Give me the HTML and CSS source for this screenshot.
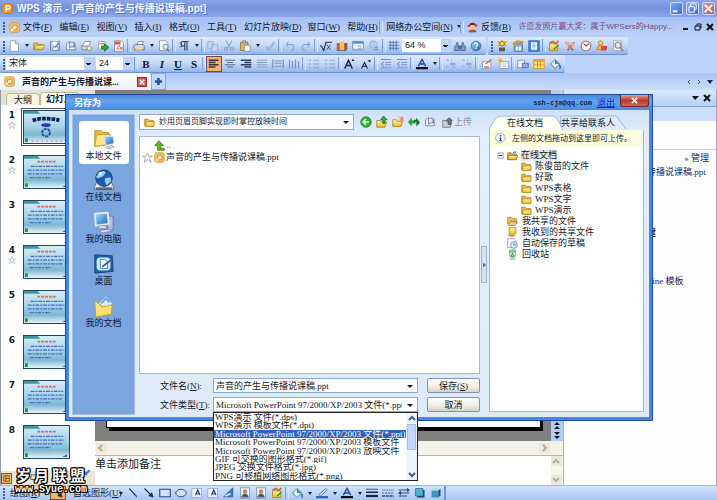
FILE: index.html
```html
<!DOCTYPE html>
<html lang="zh-CN">
<head>
<meta charset="utf-8">
<title>WPS 演示</title>
<link rel="stylesheet" href="styles.css">
</head>
<body>
<svg class="sprite" aria-hidden="true">
  <defs>
    <linearGradient id="gBlue" x2="1" y2="1"><stop offset="0" stop-color="#9fe0ff"/><stop offset="1" stop-color="#1c5fb4"/></linearGradient>
    <linearGradient id="gGold" x2="0" y2="1"><stop offset="0" stop-color="#fff3a0"/><stop offset="1" stop-color="#e8b830"/></linearGradient>
    <linearGradient id="gSlide" x2="0" y2="1"><stop offset="0" stop-color="#d5ecf8"/><stop offset=".45" stop-color="#a9d3ea"/><stop offset=".75" stop-color="#7fb6d3"/><stop offset="1" stop-color="#e6f4f8"/></linearGradient>
  </defs>
  <symbol id="app" viewBox="0 0 16 16"><rect x="1" y="1" width="14" height="14" rx="3" fill="#f39a1d" stroke="#b96a10"/><path d="M6 13V4h3a2.5 2.5 0 010 5H6" fill="none" stroke="#fff" stroke-width="2"/></symbol>
  <symbol id="doc" viewBox="0 0 16 16"><rect x="1" y="1" width="14" height="14" rx="3" fill="#f7c06a" stroke="#c98a35"/><circle cx="8.500" cy="8" r="3.500" fill="#fff2cf" stroke="#e08a1e" stroke-width="1.500"/><path d="M3 13l4-4" stroke="#fff" stroke-width="1.500"/></symbol>
  <symbol id="new" viewBox="0 0 16 16"><path d="M3 1h7l4 4v10H3z" fill="#fff" stroke="#7d8ea8"/><path d="M10 1v4h4" fill="#cfdcf0" stroke="#7d8ea8"/></symbol>
  <symbol id="open" viewBox="0 0 16 16"><path d="M1 13V4h5l1 2h6v3" fill="#e9c55a" stroke="#9b7a1e"/><path d="M1 13l3-6h12l-3 6z" fill="url(#gGold)" stroke="#9b7a1e"/></symbol>
  <symbol id="save" viewBox="0 0 16 16"><path d="M2 2h12v12H2z" fill="#b8cdf0" stroke="#5572a8"/><path d="M5 2h6v5H5z" fill="#fff"/><path d="M5 9h7v5H5z" fill="#e8edf6" stroke="#7587aa"/><path d="M8 10l5-6" stroke="#5a6b8c" stroke-width="1.500"/></symbol>
  <symbol id="book" viewBox="0 0 16 16"><path d="M2 13V5l4-3v9l3-2 4 0V4l1 9H2z" fill="#e9edf5" stroke="#6f7686"/><path d="M7 3h5v7" fill="none" stroke="#6f7686"/></symbol>
  <symbol id="printer" viewBox="0 0 16 16"><path d="M5 7l2-5h7l-2 5" fill="#fff" stroke="#6f7686"/><path d="M1 8l2-2h11l1 2v5H2z" fill="#d5d8de" stroke="#5f6675"/><path d="M4 10h8v3H4z" fill="#f6d96a"/></symbol>
  <symbol id="permit" viewBox="0 0 16 16"><path d="M1 8l5-6h7l-2 5" fill="#fff" stroke="#6f7686"/><path d="M1 8h9v5H1z" fill="#d5d8de" stroke="#6f7686"/><circle cx="11" cy="11" r="3" fill="#e5efc0" stroke="#7d8a5e"/></symbol>
  <symbol id="export" viewBox="0 0 16 16"><path d="M2 2h9v10H2z" fill="#fff" stroke="#8c98ac"/><path d="M3 4h7v2H3z" fill="#e78f50"/><path d="M6 8h4V5l6 5-6 5v-3H6z" fill="#2ca33c" stroke="#0d6d22"/></symbol>
  <symbol id="pdf" viewBox="0 0 16 16"><path d="M2 1h9l3 3v11H2z" fill="#fff" stroke="#77839a"/><path d="M2 2h8v4H2z" fill="#e25545"/><path d="M5 12l3-5 3 5z" fill="none" stroke="#ce4436"/><circle cx="12" cy="11" r="2" fill="#9aa5b5"/></symbol>
  <symbol id="preview" viewBox="0 0 16 16"><path d="M2 1h8l3 3v10H2z" fill="#fff" stroke="#7d8ea8"/><circle cx="10" cy="9" r="3.500" fill="#d9eef8" stroke="#60718c"/><path d="M12 12l3 3" stroke="#60718c" stroke-width="2"/></symbol>
  <symbol id="para" viewBox="0 0 16 16"><path d="M9 14V2m3 12V2M14 2H7a3 3 0 000 6h2" fill="none" stroke="#38415a" stroke-width="1.500"/><path d="M2 3l3 3M2 9h3" stroke="#38415a"/></symbol>
  <symbol id="copy" viewBox="0 0 16 16"><path d="M1 2h7v9H1zM6 6h8v9H6z" fill="#c9d8f1" stroke="#92a8cd"/></symbol>
  <symbol id="cut" viewBox="0 0 16 16"><path d="M4 1l6 10M12 1L6 11" stroke="#8ea2c4" stroke-width="1.500"/><circle cx="4" cy="12" r="2" fill="none" stroke="#8ea2c4" stroke-width="1.500"/><circle cx="12" cy="12" r="2" fill="none" stroke="#8ea2c4" stroke-width="1.500"/></symbol>
  <symbol id="paste" viewBox="0 0 16 16"><path d="M2 3h10v11H2z" fill="#e3b65c" stroke="#8c6b2c"/><path d="M5 1h4v3H5z" fill="#c8c8c8" stroke="#777"/><path d="M7 7h8v8H7z" fill="#fff" stroke="#6b7e9e"/></symbol>
  <symbol id="brush" viewBox="0 0 16 16"><path d="M3 9l3 4L14 3" fill="none" stroke="#9fb3d6" stroke-width="3"/></symbol>
  <symbol id="undo" viewBox="0 0 16 16"><path d="M3 6h6a4 4 0 010 8M6 2L3 6l3 4" fill="none" stroke="#8ba3d0" stroke-width="1.500"/></symbol>
  <symbol id="redo" viewBox="0 0 16 16"><path d="M13 6H7a4 4 0 000 8M10 2l3 4-3 4" fill="none" stroke="#8ba3d0" stroke-width="1.500"/></symbol>
  <symbol id="sqrt" viewBox="0 0 16 16"><path d="M0 8h2l3 6 3-11h8" fill="none" stroke="#23304f" stroke-width="1.500"/><path d="M9 6l5 7M14 6l-5 7" stroke="#23304f"/></symbol>
  <symbol id="chart" viewBox="0 0 16 16"><path d="M1 4h4v10H1z" fill="#e34a32"/><path d="M6 2h4v12H6z" fill="#f3c22d"/><path d="M11 4h4v8l-4 3z" fill="#a24c2a"/><path d="M1 14h13" stroke="#4c5570"/></symbol>
  <symbol id="table" viewBox="0 0 16 16"><path d="M1 2h14v11H1z" fill="#fff" stroke="#4a74b8"/><path d="M1 2h14v3H1z" fill="#5b8fd4"/><path d="M3 8h2m2 0h6M3 11h2m2 0h6" stroke="#6a83a8"/></symbol>
  <symbol id="link" viewBox="0 0 16 16"><circle cx="7" cy="6" r="5" fill="#b9cbe8" stroke="#92a8cd"/><path d="M7 13h7M9 10h4" stroke="#8298c0" stroke-width="2"/></symbol>
  <symbol id="grid" viewBox="0 0 16 16"><path d="M1 3h14M1 7h14M1 11h14M3 1v13M7 1v13M11 1v13" stroke="#3c62a5"/></symbol>
  <symbol id="find" viewBox="0 0 16 16"><path d="M3 3h3v4H2zM10 3h3l1 4h-4z" fill="#5b7fb9"/><path d="M1 8h6v6H1zM9 8h6v6H9zM6 8h4v3H6z" fill="#7fa2d6" stroke="#39568c"/></symbol>
  <symbol id="help" viewBox="0 0 16 16"><circle cx="8" cy="8" r="6.500" fill="url(#gBlue)" stroke="#38609f"/><path d="M6 6q0-2 2-2t2 2q0 1-2 3m0 1v2" fill="none" stroke="#fff" stroke-width="1.500"/></symbol>
  <symbol id="sun" viewBox="0 0 16 16"><path d="M8 0v8M2 2l12 6M14 2L2 8" stroke="#e2b21a" stroke-width="2"/><circle cx="8" cy="5" r="3" fill="#ffe04f" stroke="#5d5220"/><path d="M4 10h8v5H4z" fill="#55604e"/></symbol>
  <symbol id="anim" viewBox="0 0 16 16"><path d="M3 5h11v10H3z" fill="#8ab1d7" stroke="#41698f"/><path d="M1 6l6-4 8 1" fill="none" stroke="#e09324" stroke-width="3"/><path d="M5 9h3v5H5zM9 9h3v5H9z" fill="#e8f3f8"/></symbol>
  <symbol id="frame" viewBox="0 0 16 16"><path d="M1 1h14v14H1z" fill="#4b8ad8" stroke="#225aa5"/><path d="M4 3h8v10H4z" fill="#e9f4ff"/><path d="M5 8h6M8 4v7" stroke="#7aa8dd"/></symbol>
  <symbol id="gift" viewBox="0 0 16 16"><path d="M2 5h11v9H2z" fill="url(#gGold)" stroke="#a5801e"/><path d="M2 4l5-2 3 3 4-4" fill="none" stroke="#cf6226" stroke-width="2"/><path d="M8 12l6-5" stroke="#3a8b35" stroke-width="2"/></symbol>
  <symbol id="bug" viewBox="0 0 16 16"><path d="M2 3l5 4M14 3L9 7M5 14l2-4M12 14l-3-4" stroke="#8b5b50" stroke-width="2"/><circle cx="5" cy="5" r="3" fill="#e7a9a1"/><circle cx="11" cy="6" r="3" fill="#d8b8a0"/><circle cx="8" cy="10" r="3" fill="#b98576"/></symbol>
  <symbol id="clock" viewBox="0 0 16 16"><circle cx="8" cy="8" r="6.500" fill="#fff" stroke="#a07f7d" stroke-width="1.500"/><path d="M5 5l3 3 4-3" fill="none" stroke="#b03b32" stroke-width="1.500"/></symbol>
  <symbol id="person" viewBox="0 0 16 16"><circle cx="6" cy="4" r="3" fill="#f6d04b" stroke="#a5801e"/><path d="M1 13q1-6 5-6t5 6z" fill="#f2b73b" stroke="#a5801e"/><path d="M7 8h8l-1 6H7z" fill="#da4432"/></symbol>
  <symbol id="kid" viewBox="0 0 16 16"><circle cx="8" cy="7" r="5" fill="#f3c9a0"/><path d="M3 6q0-5 5-5t5 5q-5-3-10 0z" fill="#7a2418"/><path d="M1 5l3 2M15 4l-3 3" stroke="#c8372b" stroke-width="2"/><path d="M2 15q1-4 6-4t6 4z" fill="#d23b2c"/><path d="M5 15l3-3 2 3z" fill="#3a9a45"/></symbol>
  <symbol id="search" viewBox="0 0 16 16"><path d="M2 1h11v13H2z" fill="#eef0f3" stroke="#9aa0ac"/><circle cx="8" cy="7" r="4" fill="#dfe5ea" stroke="#858c98" stroke-width="1.500"/><path d="M11 10l4 5" stroke="#858c98" stroke-width="2"/></symbol>
  <symbol id="al" viewBox="0 0 16 16"><path d="M1 3h13M1 6h9M1 9h13M1 12h9" stroke="#3a3340" stroke-width="2"/></symbol>
  <symbol id="ac" viewBox="0 0 16 16"><path d="M1 3h14M4 6h8M1 9h14M4 12h8" stroke="#5d6b8e" stroke-width="1.500"/></symbol>
  <symbol id="ar" viewBox="0 0 16 16"><path d="M1 3h14M6 6h9M1 9h14M6 12h9" stroke="#33405f" stroke-width="2"/></symbol>
  <symbol id="aj" viewBox="0 0 16 16"><path d="M1 3h14M1 6h14M1 9h14M1 12h14" stroke="#8ea0c8" stroke-width="1.500"/></symbol>
  <symbol id="ad" viewBox="0 0 16 16"><path d="M1 2v12M15 2v12M3 4h10M3 7h10M3 11h10" stroke="#7f93be" stroke-width="1.500"/></symbol>
  <symbol id="cols" viewBox="0 0 16 16"><path d="M2 2v12M6 4v10M10 2v12M14 5v9" stroke="#7f93be" stroke-width="1.500"/></symbol>
  <symbol id="list" viewBox="0 0 16 16"><path d="M1 3h3M1 8h3M1 13h3M7 3h8M7 8h8M7 13h8" stroke="#8ba3d0" stroke-width="1.500"/></symbol>
  <symbol id="ind" viewBox="0 0 16 16"><path d="M1 2h14M7 6h8M7 9h8M1 13h14M5 5L2 8l3 3" fill="none" stroke="#7f93be" stroke-width="1.500"/></symbol>
  <symbol id="dots" viewBox="0 0 16 16"><path d="M2 3h3M2 11h3M8 3h2M8 7h5v2H8zM9 12h5" fill="none" stroke="#8ba3d0" stroke-width="1.500"/></symbol>
  <symbol id="Aup" viewBox="0 0 16 16"><path d="M1 14L6 3l5 11M3 10h6" fill="none" stroke="#182440" stroke-width="2"/><path d="M10 4l2-3 2 3z" fill="#182440"/></symbol>
  <symbol id="Adn" viewBox="0 0 16 16"><path d="M2 14l4-8 4 8M4 11h5" fill="none" stroke="#182440" stroke-width="1.500"/><path d="M10 3h5l-2 3z" fill="#182440"/></symbol>
  <symbol id="Acol" viewBox="0 0 16 16"><path d="M3 11l5-9 5 9M5 8h6" fill="none" stroke="#244a98" stroke-width="2"/><path d="M0 12h16v3H0z" fill="#101010"/></symbol>
  <symbol id="design" viewBox="0 0 16 16"><path d="M2 5h11v9H2z" fill="#fff" stroke="#8293b2"/><path d="M4 12h7" stroke="#e06c4c" stroke-width="2"/><path d="M6 8l8-6" stroke="#d6654a" stroke-width="2"/></symbol>
  <symbol id="newslide" viewBox="0 0 16 16"><path d="M4 5h11v9H4z" fill="#fff" stroke="#7d8ea8"/><path d="M6 8h7M6 11h7" stroke="#8ea6cd"/><path d="M1 3h6M4 0v6" stroke="#eab526" stroke-width="2"/></symbol>
  <symbol id="cam" viewBox="0 0 16 16"><path d="M1 3h9v10H1z" fill="#fff" stroke="#64799c"/><path d="M7 7h8v6H7z" fill="#8fb2e2" stroke="#3e639d"/></symbol>
  <symbol id="sheet" viewBox="0 0 16 16"><path d="M1 2h14v12H1z" fill="#ffe27a" stroke="#d08a1e"/><path d="M1 2h14v3H1z" fill="#ef9a2a"/><path d="M6 5v9M10 5v9M1 9h14" stroke="#d08a1e"/></symbol>
  <symbol id="bucket" viewBox="0 0 16 16"><path d="M2 8l6-6 6 6-6 6z" fill="#e8f2fb" stroke="#2b566e"/><path d="M8 2l6 6-6 0z" fill="#2d9d8d"/><path d="M14 9q2 4 0 5" stroke="#1c68b5" stroke-width="2" fill="none"/></symbol>
  <symbol id="pen" viewBox="0 0 16 16"><path d="M4 10l9-8 2 2-9 8z" fill="#e6f0fa" stroke="#3d5f8e"/><path d="M0 12h16v3H0z" fill="#2b65b5"/></symbol>
  <symbol id="line" viewBox="0 0 16 16"><path d="M3 2l10 11" stroke="#1d3d73" stroke-width="1.500"/></symbol>
  <symbol id="arrow" viewBox="0 0 16 16"><path d="M2 2l8 8" stroke="#1b2b4a" stroke-width="1.500"/><path d="M14 14l-2-7-5 5z" fill="#1b2b4a"/></symbol>
  <symbol id="rect" viewBox="0 0 16 16"><path d="M1 3h14v10H1z" fill="#cfe0f8" stroke="#26467c" stroke-width="1.500"/></symbol>
  <symbol id="oval" viewBox="0 0 16 16"><ellipse cx="8" cy="8" rx="7" ry="5" fill="#cfe0f8" stroke="#26467c" stroke-width="1.200"/></symbol>
  <symbol id="text" viewBox="0 0 16 16"><path d="M1 2h13v12H1z" fill="#eef3fb" stroke="#91a5c8"/><path d="M6 11l3-7 3 7M7 9h4" fill="none" stroke="#273c68" stroke-width="1.500"/></symbol>
  <symbol id="wart" viewBox="0 0 16 16"><path d="M1 13L13 1v12z" fill="#3d7ed3" stroke="#1d4c91"/><path d="M3 12l7-3" stroke="#d8eaff" stroke-width="2"/></symbol>
  <symbol id="pic" viewBox="0 0 16 16"><path d="M2 1h12v14H2z" fill="#f7f7f7" stroke="#6d7c98"/><circle cx="8" cy="6" r="3" fill="#b78566"/><path d="M3 14q1-5 5-5t5 5z" fill="#4a5670"/></symbol>
  <symbol id="lw" viewBox="0 0 16 16"><path d="M0 3h16" stroke="#1b2540"/><path d="M0 7h16" stroke="#1b2540" stroke-width="2"/><path d="M0 12h16" stroke="#1b2540" stroke-width="3"/></symbol>
  <symbol id="ls" viewBox="0 0 16 16"><path d="M0 4h16" stroke="#334a76" stroke-dasharray="2 1"/><path d="M0 8h16" stroke="#334a76" stroke-dasharray="3 1"/><path d="M0 12h16" stroke="#334a76" stroke-width="2" stroke-dasharray="4 1"/></symbol>
  <symbol id="as" viewBox="0 0 16 16"><path d="M1 4h11M4 8h11M1 12h11" stroke="#334a76" stroke-width="1.500"/><path d="M12 1l4 3-4 3zM4 5L0 8l4 3z" fill="#334a76"/></symbol>
  <symbol id="shadow" viewBox="0 0 16 16"><path d="M4 4h10v10H4z" fill="#133f6e"/><path d="M2 2h10v10H2z" fill="#4fb0cf" stroke="#2a7396"/></symbol>
  <symbol id="cube" viewBox="0 0 16 16"><path d="M2 5l3-3h9l-3 3z" fill="#a5dcee"/><path d="M2 5h9v9H2z" fill="#3a98be"/><path d="M11 5l3-3v9l-3 3z" fill="#14567f"/></symbol>
  <symbol id="folder" viewBox="0 0 16 16"><path d="M1 13V3h5l2 2h6v8z" fill="#e5bd45" stroke="#a37c1d"/><path d="M3 7h12l-1 7H2z" fill="url(#gGold)" stroke="#a37c1d"/></symbol>
  <symbol id="folderopen" viewBox="0 0 16 16"><path d="M1 14V4h5l2 2h6v8z" fill="#d9b23b" stroke="#8f6c17"/><path d="M3 8h13l-3 6H1z" fill="url(#gGold)" stroke="#8f6c17"/><path d="M8 5q1-4 6-3l-2 3z" fill="#38a6b6"/></symbol>
  <symbol id="up" viewBox="0 0 16 16"><path d="M7 1l7 7H10v4h5v3H5V8H1z" fill="#58b52c" stroke="#27710f"/></symbol>
  <symbol id="star" viewBox="0 0 16 16"><path d="M8 1l2 5h5l-4 3 2 6-5-4-5 4 2-6-4-3h5z" fill="#fff" stroke="#7f8794"/></symbol>
  <symbol id="go" viewBox="0 0 16 16"><circle cx="8" cy="8" r="7" fill="#38a83a" stroke="#1f7a25"/><path d="M12 8H4m4-4L4 8l4 4" fill="none" stroke="#d6ffcf" stroke-width="2"/></symbol>
  <symbol id="fup" viewBox="0 0 16 16"><path d="M1 6h5l1 2h7l-2 7H1z" fill="url(#gGold)" stroke="#a37c1d"/><path d="M10 0l5 5h-3v5H9V5H6z" fill="#45a52b" stroke="#216e14"/></symbol>
  <symbol id="fnew" viewBox="0 0 16 16"><path d="M1 5h5l1 2h7l-2 7H1z" fill="url(#gGold)" stroke="#a37c1d"/><path d="M13 0v8M9 4h8M10 1l6 6M16 1l-6 6" stroke="#f07b39"/></symbol>
  <symbol id="sync" viewBox="0 0 16 16"><path d="M0 8l5-6v4h5v4H5v4z" fill="#2c9b42"/><path d="M16 9l-5-7v3H8v3h3v6z" fill="#187530"/></symbol>
  <symbol id="upload" viewBox="0 0 16 16"><path d="M1 5h5l1 2h7l-2 8H1z" fill="#c9cdd2" stroke="#60656e"/><path d="M10 1l5 4-2 1v5H9V6L6 5z" fill="#70757d" stroke="#474c55"/></symbol>
  <symbol id="info" viewBox="0 0 16 16"><path d="M8 1a6 6 0 014 11l-4 3-2-2A6 6 0 018 1z" fill="#f6faff" stroke="#6f91c5"/><path d="M8 3v2M7 7h1v4M6 11h4" fill="none" stroke="#1b55b0" stroke-width="2"/></symbol>
  <symbol id="share" viewBox="0 0 16 16"><path d="M1 11V2h5l2 2h6v7z" fill="#e5bd45" stroke="#a37c1d"/><path d="M1 12l5-4 9 1-4 5H4z" fill="#f1c6a0" stroke="#955f35"/></symbol>
  <symbol id="recv" viewBox="0 0 16 16"><path d="M3 1h10v8l-4 3-6-3z" fill="url(#gGold)" stroke="#a37c1d"/><path d="M2 9q5 4 9 1l2 2-6 3-5-2z" fill="#d99a3a"/></symbol>
  <symbol id="draft" viewBox="0 0 16 16"><path d="M1 1h9l3 3v10H1z" fill="#fff" stroke="#7688a8"/><circle cx="10" cy="10" r="5" fill="#d8e7f6" stroke="#6e85a8"/><path d="M10 7v3h3" fill="none" stroke="#3b5686"/></symbol>
  <symbol id="bin" viewBox="0 0 16 16"><path d="M3 3h10l-2 12H5z" fill="#d8f0dd" stroke="#6fa57e"/><ellipse cx="8" cy="3" rx="5" ry="2" fill="#9fd0aa" stroke="#5d946d"/><path d="M6 10l2-3 2 3-2 2z" fill="none" stroke="#2f9b4c" stroke-width="1.500"/></symbol>
  <symbol id="local" viewBox="0 0 24 24"><path d="M2 20V3h7l2 2h6v13z" fill="#e9bd42" stroke="#b58a22"/><path d="M2 20l2-13h15l-2 11z" fill="#ffe48a" stroke="#c89c30"/><path d="M12 9h10l1 8-9 2z" fill="url(#gBlue)" stroke="#d9e9f8"/><path d="M14 21l7-2 2 2-7 2z" fill="#dbe4ef" stroke="#8fa2ba"/></symbol>
  <symbol id="web" viewBox="0 0 24 24"><path d="M4 14h16l3 8H1z" fill="#e9eef4" stroke="#6d7480"/><path d="M3 20h18v3H3z" fill="#5d646e"/><circle cx="12" cy="10" r="9" fill="#1c5cab" stroke="#123b77"/><path d="M6 5q6-5 8-1l-3 4-5 2-3-1zM13 10l6-1 1 4-5 5-2-4z" fill="#8fd2f2"/><circle cx="8" cy="5" r="2" fill="#d7f2ff"/></symbol>
  <symbol id="pc" viewBox="0 0 24 24"><path d="M16 5l6 1v14l-6 2z" fill="#b7bde2" stroke="#6c73a8"/><path d="M2 3l14-1 1 12-14 2z" fill="url(#gBlue)" stroke="#dfeaf8" stroke-width="2"/><path d="M7 16h6l3 3H6z" fill="#e5e9f1" stroke="#8790a8"/><path d="M7 21l11-1 3 2-11 2z" fill="#dadfed" stroke="#8087a9"/></symbol>
  <symbol id="desk" viewBox="0 0 24 24"><path d="M2 2l19 1 1 17-20 2z" fill="#1d62ac" stroke="#123f7a"/><rect x="4" y="5" width="15" height="14" rx="4" fill="#d5ecf9"/><path d="M8 7h5l3 3v7H8z" fill="#fff" stroke="#3d78b4"/><path d="M10 15l12-9" stroke="#4a5a78" stroke-width="2"/></symbol>
  <symbol id="mydoc" viewBox="0 0 24 24"><path d="M6 9l8-8 7 8-5 9z" fill="#dcecfb" stroke="#7ba1cf"/><path d="M9 9l5-5 4 4" fill="none" stroke="#6fa5dd" stroke-width="2"/><path d="M2 6l5 4 3 3 11-2-1 10-17 3z" fill="#ffe070" stroke="#c79b25"/></symbol>
  <symbol id="thumb" viewBox="0 0 47 34" preserveAspectRatio="none"><path d="M0 0h47v34H0z" fill="url(#gSlide)"/><path d="M0 0h14l3 3H0z" fill="#3f979d"/><path d="M14 6h19" stroke="#d8686c" stroke-width="2" stroke-dasharray="3 1"/><path d="M7 11h34M4 15h38M4 19h36M6 23h22" stroke="#416fbd" stroke-width="1.500" stroke-dasharray="4 1 2 1"/><path d="M1 29h3v4H1z" fill="#23923a"/><path d="M40 33l5-3v3z" fill="#3e668e"/></symbol>
  <symbol id="thumb1" viewBox="0 0 47 34" preserveAspectRatio="none"><path d="M0 0h47v34H0z" fill="url(#gSlide)"/><path d="M0 0h14l3 3H0z" fill="#3f979d"/><path d="M9 10q13-4 28 0" fill="none" stroke="#11255c" stroke-width="4" stroke-dasharray="4 1"/><ellipse cx="23" cy="15" rx="5" ry="2" fill="#1838c0"/><circle cx="23" cy="23" r="4" fill="none" stroke="#204a9c" stroke-width="2" stroke-dasharray="3 1"/><path d="M8 32h32" stroke="#c07a8a" stroke-dasharray="2 3"/><path d="M1 29h3v4H1z" fill="#23923a"/></symbol>
</svg>

<div class="app">
  <header class="titlebar">
    <svg class="ic"><use href="#app"/></svg>
    <h1>WPS 演示 - [声音的产生与传播说课稿.ppt]</h1>
    <div class="winctl">
      <button aria-label="最小化"><svg viewBox="0 0 12 12"><path d="M2 9h5" stroke="#fff" stroke-width="2"/></svg></button>
      <button aria-label="还原"><svg viewBox="0 0 12 12"><path d="M4 4V1h6v6H8M2 4h6v6H2z" fill="none" stroke="#fff" stroke-width="1"/></svg></button>
      <button class="x" aria-label="关闭"><svg viewBox="0 0 12 12"><path d="M2 2l8 8M10 2l-8 8" stroke="#fff" stroke-width="2"/></svg></button>
    </div>
  </header>

  <nav class="menubar">
    <i class="grip"></i><svg class="ic"><use href="#doc"/></svg>
    <button>文件(<u>F</u>)</button><button>编辑(<u>E</u>)</button><button>视图(<u>V</u>)</button><button>插入(<u>I</u>)</button><button>格式(<u>O</u>)</button><button>工具(<u>T</u>)</button><button>幻灯片放映(<u>D</u>)</button><button>窗口(<u>W</u>)</button><button>帮助(<u>H</u>)</button>
    <i class="sep"></i><button class="drop">网络办公空间(<u>N</u>)</button><i class="sep"></i>
    <svg class="ic"><use href="#kid"/></svg><button>反馈(<u>B</u>)</button>
    <a class="news" href="#">许愿发照片赢大奖：属于WPSers的Happy...</a>
    <div class="docctl">
      <button aria-label="最小化文档"><svg viewBox="0 0 8 8"><path d="M1 6h5" stroke="#111" stroke-width="2"/></svg></button>
      <button aria-label="还原文档"><svg viewBox="0 0 8 8"><path d="M3 3V1h4v4H6M1 3h5v4H1z" fill="none" stroke="#111"/></svg></button>
      <button aria-label="关闭文档"><svg viewBox="0 0 8 8"><path d="M1 1l6 6M7 1L1 7" stroke="#111" stroke-width="2"/></svg></button>
    </div>
  </nav>

  <div class="toolrow">
    <div class="toolbar">
      <i class="grip"></i>
      <button class="tb" aria-label="新建"><svg><use href="#new"/></svg></button><button class="dd" aria-label="更多新建"></button>
      <button class="tb" aria-label="打开"><svg><use href="#open"/></svg></button><button class="tb" aria-label="保存"><svg><use href="#save"/></svg></button><button class="tb" aria-label="阅读"><svg><use href="#book"/></svg></button><button class="tb" aria-label="权限"><svg><use href="#permit"/></svg></button><button class="tb" aria-label="发送"><svg><use href="#export"/></svg></button><button class="tb" aria-label="输出PDF"><svg><use href="#pdf"/></svg></button>
      <i class="sep"></i><button class="tb" aria-label="打印"><svg><use href="#printer"/></svg></button><button class="dd" aria-label="打印选项"></button><button class="tb" aria-label="预览"><svg><use href="#preview"/></svg></button>
      <i class="sep"></i><button class="tb" aria-label="段落"><svg><use href="#para"/></svg></button><button class="dd" aria-label="段落选项"></button>
      <i class="sep"></i><button class="tb" aria-label="复制"><svg><use href="#copy"/></svg></button><button class="tb" aria-label="剪切"><svg><use href="#cut"/></svg></button><button class="tb" aria-label="粘贴"><svg><use href="#paste"/></svg></button><button class="dd" aria-label="粘贴选项"></button><button class="tb" aria-label="格式刷"><svg><use href="#brush"/></svg></button>
      <i class="sep"></i><button class="tb" aria-label="撤销"><svg><use href="#undo"/></svg></button><button class="tb" aria-label="恢复"><svg><use href="#redo"/></svg></button>
      <i class="sep"></i><button class="tb" aria-label="公式"><svg><use href="#sqrt"/></svg></button><button class="tb" aria-label="图表"><svg><use href="#chart"/></svg></button><button class="tb" aria-label="表格"><svg><use href="#table"/></svg></button><button class="tb" aria-label="超链接"><svg><use href="#link"/></svg></button>
      <i class="sep"></i><button class="tb" aria-label="网格"><svg><use href="#grid"/></svg></button>
      <select class="box zoom" aria-label="显示比例"><option>64 %</option></select>
      <button class="tb" aria-label="查找"><svg><use href="#find"/></svg></button><button class="tb" aria-label="帮助"><svg><use href="#help"/></svg></button>
    </div>
    <div class="toolbar">
      <i class="grip"></i>
      <button class="tb" aria-label="灵感"><svg><use href="#sun"/></svg></button><button class="tb" aria-label="动画"><svg><use href="#anim"/></svg></button><button class="tb" aria-label="版式"><svg><use href="#frame"/></svg></button><i class="sep"></i><button class="tb" aria-label="素材"><svg><use href="#gift"/></svg></button><button class="tb" aria-label="剪贴画"><svg><use href="#bug"/></svg></button><button class="tb" aria-label="计时"><svg><use href="#clock"/></svg></button><button class="tb" aria-label="账户"><svg><use href="#person"/></svg></button><button class="tb" aria-label="搜索"><svg><use href="#search"/></svg></button>
    </div>
  </div>

  <div class="toolrow">
    <div class="toolbar format">
      <i class="grip"></i>
      <select class="box font" aria-label="字体"><option>宋体</option></select>
      <select class="box size" aria-label="字号"><option>24</option></select>
      <i class="sep"></i><button class="tb ch b" aria-label="加粗">B</button><button class="tb ch i" aria-label="倾斜">I</button><button class="tb ch u" aria-label="下划线">U</button><button class="tb ch b" aria-label="阴影">S</button>
      <i class="sep"></i><button class="tb on" aria-label="左对齐"><svg><use href="#al"/></svg></button><button class="tb" aria-label="居中"><svg><use href="#ac"/></svg></button><button class="tb" aria-label="右对齐"><svg><use href="#ar"/></svg></button><button class="tb" aria-label="两端对齐"><svg><use href="#aj"/></svg></button><button class="tb" aria-label="分散对齐"><svg><use href="#ad"/></svg></button><button class="tb" aria-label="分栏"><svg><use href="#cols"/></svg></button>
      <i class="sep"></i><button class="tb" aria-label="编号"><svg><use href="#list"/></svg></button><button class="tb" aria-label="项目符号"><svg><use href="#list"/></svg></button>
      <i class="sep"></i><button class="tb" aria-label="增大字号"><svg><use href="#Aup"/></svg></button><button class="tb" aria-label="减小字号"><svg><use href="#Adn"/></svg></button>
      <i class="sep"></i><button class="tb" aria-label="减少缩进"><svg><use href="#ind"/></svg></button><button class="tb" aria-label="增加缩进"><svg><use href="#ind"/></svg></button>
      <i class="sep"></i><button class="tb" aria-label="字体颜色"><svg><use href="#Acol"/></svg></button><button class="dd" aria-label="颜色选项"></button>
      <i class="sep"></i><button class="tb" aria-label="升级"><svg><use href="#dots"/></svg></button><button class="tb" aria-label="降级"><svg><use href="#dots"/></svg></button>
      <i class="sep"></i><button class="tb" aria-label="设计"><svg><use href="#design"/></svg></button><button class="tb" aria-label="新幻灯片"><svg><use href="#newslide"/></svg></button>
      <i class="sep"></i><button class="tb" aria-label="截图"><svg><use href="#cam"/></svg></button><button class="tb" aria-label="插入表格"><svg><use href="#sheet"/></svg></button><button class="tb" aria-label="填充"><svg><use href="#bucket"/></svg></button>
    </div>
  </div>

  <div class="doctabs">
    <div class="doctab"><svg class="ic"><use href="#doc"/></svg><span>声音的产生与传播说课...</span><button class="tabx" aria-label="关闭标签"><svg viewBox="0 0 8 8"><path d="M1 1l6 6M7 1L1 7" stroke="#fff" stroke-width="2"/></svg></button></div>
    <button class="tabnew" aria-label="新建标签"><svg viewBox="0 0 10 10"><path d="M5 1v8M1 5h8" stroke="#2457a8" stroke-width="3"/></svg></button>
    <div class="tabnav"><svg viewBox="0 0 30 8"><path d="M6 2L4 4l2 2M14 2l2 2-2 2" fill="none" stroke="#456"/><path d="M23 2h6l-3 4z" fill="#1b2a4a"/></svg></div>
  </div>

  <main class="work">
    <aside class="outline">
      <div class="otabs"><button>大纲</button><button class="cur">幻灯片</button></div>
      <ol class="thumbs">
        <li><div class="num">1<svg><use href="#star"/></svg></div><svg class="th sel"><use href="#thumb1"/></svg></li>
        <li><div class="num">2<svg><use href="#star"/></svg></div><svg class="th"><use href="#thumb"/></svg></li>
        <li><div class="num">3</div><svg class="th"><use href="#thumb"/></svg></li>
        <li><div class="num">4<svg><use href="#star"/></svg></div><svg class="th"><use href="#thumb"/></svg></li>
        <li><div class="num">5</div><svg class="th"><use href="#thumb"/></svg></li>
        <li><div class="num">6</div><svg class="th"><use href="#thumb"/></svg></li>
        <li><div class="num">7</div><svg class="th"><use href="#thumb"/></svg></li>
        <li><div class="num">8</div><svg class="th"><use href="#thumb"/></svg></li>
      </ol>
      <div class="views"><button class="hot" aria-label="普通视图"><svg viewBox="0 0 10 10"><path d="M1 1h8v8H1zM4 1v8M4 5h5" fill="none" stroke="#5a4630"/></svg></button><button aria-label="浏览视图"><svg viewBox="0 0 10 10"><path d="M1 1h3v3H1zM6 1h3v3H6zM1 6h3v3H1zM6 6h3v3H6z" fill="none" stroke="#4a4a4a"/></svg></button><button aria-label="放映"><svg viewBox="0 0 10 10"><path d="M1 1h8v5H1zM5 6v3" fill="none" stroke="#4a4a4a"/></svg></button><i class="sdown"></i></div>
    </aside>

    <section class="center">
      <div class="stage"><div class="canvas"><div class="slide"></div></div><div class="vbar"><svg viewBox="0 0 8 18"><path d="M1 4l3-3 3 3zM1 8l3-3 3 3zM1 11h6l-3 3zM1 15h6l-3 3z" fill="#10182c"/></svg></div></div>
      <div class="hbar"><button aria-label="向左"><svg viewBox="0 0 10 8"><path d="M6 1L3 4l3 3" fill="none" stroke="#b3b0a2" stroke-width="2"/></svg></button><button aria-label="向右"><svg viewBox="0 0 10 8"><path d="M4 1l3 3-3 3" fill="none" stroke="#b3b0a2" stroke-width="2"/></svg></button></div>
      <div class="notes"><p>单击添加备注</p><div class="nbar"><button aria-label="向上"><svg viewBox="0 0 10 8"><path d="M2 6l3-3 3 3" fill="none" stroke="#b3b0a2" stroke-width="2"/></svg></button><button aria-label="向下"><svg viewBox="0 0 10 8"><path d="M2 2l3 3 3-3" fill="none" stroke="#b3b0a2" stroke-width="2"/></svg></button></div></div>
    </section>

    <aside class="task">
      <div class="taskhead"><svg viewBox="0 0 20 8"><path d="M1 2h7l-4 4z" fill="#111"/><path d="M13 1l6 6M19 1l-6 6" stroke="#111" stroke-width="2"/></svg></div>
      <div class="tasktools"></div>
      <a class="manage" href="#">» 管理</a>
      <a class="recent" href="#">声音的产生与传播说课稿.ppt</a>
      <h2>从现有文稿新建</h2>
      <a class="online" href="#">WPS Office Online 模板</a>
    </aside>
  </main>

  <footer class="drawbar">
    <i class="grip"></i><button class="txt">绘图(<u>R</u>)</button><button class="tb on" aria-label="选择对象"><svg><use href="#arrow"/></svg></button>
    <button class="txt auto">自选图形(<u>U</u>)</button><button class="dd" aria-label="自选图形选项"></button>
    <button class="tb" aria-label="直线"><svg><use href="#line"/></svg></button><button class="tb" aria-label="箭头"><svg><use href="#arrow"/></svg></button><button class="tb" aria-label="矩形"><svg><use href="#rect"/></svg></button><button class="tb" aria-label="椭圆"><svg><use href="#oval"/></svg></button><button class="tb" aria-label="文本框"><svg><use href="#text"/></svg></button><button class="tb" aria-label="竖排文本框"><svg><use href="#text"/></svg></button><button class="tb" aria-label="艺术字"><svg><use href="#wart"/></svg></button><button class="tb" aria-label="图片"><svg><use href="#pic"/></svg></button><button class="tb" aria-label="来自文件"><svg><use href="#pic"/></svg></button><button class="tb" aria-label="图示"><svg><use href="#gift"/></svg></button>
    <i class="sep"></i><button class="tb" aria-label="填充颜色"><svg><use href="#bucket"/></svg></button><button class="dd" aria-label="填充选项"></button><button class="tb" aria-label="线条颜色"><svg><use href="#pen"/></svg></button><button class="dd" aria-label="线条选项"></button><button class="tb" aria-label="文字颜色"><svg><use href="#Acol"/></svg></button><button class="dd" aria-label="文字颜色选项"></button>
    <button class="tb" aria-label="线型"><svg><use href="#lw"/></svg></button><button class="tb" aria-label="虚线"><svg><use href="#ls"/></svg></button><button class="tb" aria-label="箭头样式"><svg><use href="#as"/></svg></button><button class="tb" aria-label="阴影样式"><svg><use href="#shadow"/></svg></button><button class="tb" aria-label="三维"><svg><use href="#cube"/></svg></button>
    <i class="end"></i>
  </footer>
</div>

<div class="dialog" role="dialog" aria-labelledby="dlg">
  <div class="dtitle"><h2 id="dlg">另存为</h2><span class="user">ssh-cjm@qq.com</span><a href="#">退出</a><button aria-label="关闭"><svg viewBox="0 0 8 8"><path d="M1 1l6 6M7 1L1 7" stroke="#fff" stroke-width="2"/></svg></button></div>
  <div class="dbody">
    <nav class="places">
      <button class="cur"><svg><use href="#local"/></svg>本地文件</button>
      <button><svg><use href="#web"/></svg>在线文档</button>
      <button><svg><use href="#pc"/></svg>我的电脑</button>
      <button><svg><use href="#desk"/></svg>桌面</button>
      <button><svg><use href="#mydoc"/></svg>我的文档</button>
    </nav>
    <div class="browse">
      <div class="pathrow">
        <div class="path"><svg class="ic"><use href="#folder"/></svg><select aria-label="位置"><option>妙用页眉页脚实现即时掌控放映时间</option></select></div>
        <button class="tb" aria-label="后退"><svg><use href="#go"/></svg></button><button class="tb" aria-label="上一级"><svg><use href="#fup"/></svg></button><button class="tb" aria-label="新建文件夹"><svg><use href="#fnew"/></svg></button><button class="tb" aria-label="刷新"><svg><use href="#sync"/></svg></button><button class="tb" aria-label="视图"><svg><use href="#book"/></svg></button><button class="upl"><svg class="ic"><use href="#upload"/></svg>上传</button>
      </div>
      <ul class="files">
        <li class="parent"><svg class="ic"><use href="#up"/></svg>..</li>
        <li><svg class="ic"><use href="#star"/></svg><svg class="ic"><use href="#doc"/></svg>声音的产生与传播说课稿.ppt</li>
      </ul>
      <form class="form">
        <label for="fn">文件名(<u>N</u>):</label>
        <div class="field"><input id="fn" value="声音的产生与传播说课稿.ppt"></div>
        <button type="button">保存(<u>S</u>)</button>
        <label for="ft">文件类型(<u>T</u>):</label>
        <div class="field">
          <select id="ft"><option>Microsoft PowerPoint 97/2000/XP/2003 文件(*.ppt)</option></select>
          <div class="popup">
            <ul role="listbox" aria-label="文件类型">
              <li>WPS演示 文件(*.dps)</li>
              <li>WPS演示 模板文件(*.dpt)</li>
              <li class="hl">Microsoft PowerPoint 97/2000/XP/2003 文件(*.ppt)</li>
              <li>Microsoft PowerPoint 97/2000/XP/2003 模板文件</li>
              <li>Microsoft PowerPoint 97/2000/XP/2003 放映文件</li>
              <li>GIF 可交换的图形格式(*.gif)</li>
              <li>JPEG 交换文件格式(*.jpg)</li>
              <li>PNG 可移植网络图形格式(*.png)</li>
            </ul>
            <div class="pbar"><svg viewBox="0 0 8 6"><path d="M1 5l3-3 3 3" fill="none" stroke="#3f5f9a" stroke-width="2"/></svg><i></i><svg viewBox="0 0 8 6"><path d="M1 1l3 3 3-3" fill="none" stroke="#3f5f9a" stroke-width="2"/></svg></div>
          </div>
        </div>
        <button type="button">取消</button>
      </form>
    </div>
    <button class="split" aria-label="折叠"><svg viewBox="0 0 4 6"><path d="M0 0l4 3-4 3z" fill="#3f6db5"/></svg></button>
    <div class="cloud">
      <div class="ctabs">
        <svg viewBox="0 0 156 14" preserveAspectRatio="none"><path d="M72 14V0h56l10 13" fill="#dfeaf8" stroke="#9fb6d6"/><path d="M0 14Q6 0 12 0h52q5 0 10 14" fill="#fffff4" stroke="#9fb6d6"/></svg>
        <button>在线文档</button><button>共享给联系人</button>
      </div>
      <div class="cpanel">
        <p class="tip"><svg class="ic"><use href="#info"/></svg>左侧的文档拖动到这里即可上传。</p>
        <ul class="tree">
          <li class="root"><svg class="pm" viewBox="0 0 8 8"><path d="M1 1h6v6H1z" fill="#fff" stroke="#8d99ad"/><path d="M2 4h4" stroke="#222"/></svg><svg class="ic"><use href="#folderopen"/></svg><b>在线文档</b></li>
          <li class="sub"><svg class="ic"><use href="#folder"/></svg>陈俊苗的文件</li>
          <li class="sub"><svg class="ic"><use href="#folder"/></svg>好歌</li>
          <li class="sub"><svg class="ic"><use href="#folder"/></svg>WPS表格</li>
          <li class="sub"><svg class="ic"><use href="#folder"/></svg>WPS文字</li>
          <li class="sub"><svg class="ic"><use href="#folder"/></svg>WPS演示</li>
          <li><svg class="ic"><use href="#share"/></svg>我共享的文件</li>
          <li><svg class="ic"><use href="#recv"/></svg>我收到的共享文件</li>
          <li><svg class="ic"><use href="#draft"/></svg>自动保存的草稿</li>
          <li><svg class="ic"><use href="#bin"/></svg>回收站</li>
        </ul>
      </div>
    </div>
  </div>
</div>

<div class="brand"><div><span>岁</span><span>月</span><span>联</span><span>盟</span></div><p>www.Syue.com</p></div>
</body>
</html>
```
FILE: styles.css
```css
* { box-sizing: border-box; margin: 0; padding: 0; }
body { position: relative; overflow: hidden; color: #101828; font: 9px/12px "Liberation Serif", "Noto Sans CJK SC", serif; background: #bcd3f8; }
button, input, select { font: inherit; color: inherit; border: 0; background: none; border-radius: 0; appearance: none; outline: 0; min-width: 0; white-space: nowrap; }
ul, ol { list-style: none; }
a { color: inherit; text-decoration: none; }
svg { display: block; overflow: visible; }
.sprite { position: absolute; width: 0; height: 0; }
.ic { width: 11px; height: 11px; flex: none; }

.app { display: flex; flex-direction: column; min-height: 100vh; }

.titlebar { display: flex; align-items: center; gap: 4px; height: 17px; padding: 0 2px; background: linear-gradient(#8aa4e8, #7490dd 50%, #8ba7ea); color: #f4f8ff; }
.titlebar h1 { flex: 1; font: bold 10px/14px "Liberation Sans", "Noto Sans CJK SC", sans-serif; text-shadow: 1px 1px 0 #5a76c4; white-space: nowrap; }
.winctl { display: flex; gap: 3px; }
.winctl button { width: 13px; height: 13px; border: 1px solid #c9d8fb; border-radius: 2px; background: linear-gradient(135deg, #86a6f2, #3f66d4); }
.winctl .x { background: linear-gradient(135deg, #e0929e, #b4586c); }

.menubar { display: flex; align-items: center; height: 20px; gap: 9px; padding-left: 2px; background: linear-gradient(#a5c0f4, #bcd2f8); white-space: nowrap; }
.menubar .grip, .menubar .ic { margin-right: -6px; }
.menubar .sep { margin: 0 -6px; }
.menubar .drop::after { content: ""; display: inline-block; margin: 0 0 2px 4px; border: 2px solid transparent; border-top: 3px solid #222; border-bottom: 0; }
.news { color: #7b4a86; font: 8px/12px "Liberation Sans", "Noto Sans CJK SC", sans-serif; }
.docctl { display: flex; gap: 4px; margin-left: auto; padding-right: 3px; }
.docctl button { width: 8px; height: 8px; }
.grip { width: 4px; height: 12px; flex: none; background: radial-gradient(circle at 2px 2px, #3f5f9c 1px, transparent 1px) 0 0 / 4px 3px; }
.sep { width: 4px; height: 12px; flex: none; border: solid; border-color: #7d9fd8 #d8e6fc #7d9fd8 #7d9fd8; border-width: 0 1px; }

.toolrow { display: flex; gap: 2px; background: #bcd3f8; }
.toolbar { display: flex; align-items: center; height: 18px; padding-right: 2px; border-radius: 2px; background: linear-gradient(#dce9fd, #c3d8f8 50%, #94b5ea); border-bottom: 1px solid #6c90d0; }
.toolbar .grip { margin: 0 0 0 2px; }
.toolbar .sep { height: 13px; }
.tb { display: flex; align-items: center; justify-content: center; width: 16px; height: 16px; flex: none; }
.tb svg { width: 12px; height: 12px; }
.on { border: 1px solid #6b4b56; background: #f7b265; }
.dd { width: 9px; height: 14px; flex: none; }
.dd::after { content: ""; display: block; width: 0; margin: auto; border: 2px solid transparent; border-top: 3px solid #222; border-bottom: 0; }
.ch { font-size: 11px; }
.b { font-weight: bold; }
.i { font-weight: bold; font-style: italic; }
.u { font-weight: bold; text-decoration: underline; }
.box { height: 13px; padding-left: 3px; background: linear-gradient(#222, #222) right 4px top 6px / 5px 1px no-repeat, linear-gradient(#222, #222) right 5px top 7px / 3px 1px no-repeat, linear-gradient(#bcd2f7, #bcd2f7) right / 11px 100% no-repeat, #fff; font-family: "Liberation Sans", "Noto Sans CJK SC", sans-serif; line-height: 13px; }
.zoom { width: 50px; }
.font { width: 89px; margin-right: 1px; }
.size { width: 38px; }

.doctabs { display: flex; align-items: stretch; height: 17px; background: linear-gradient(#aac6f5, #c9dcfa); }
.doctab { display: flex; align-items: center; gap: 7px; width: 151px; padding: 0 4px; background: linear-gradient(#fff, #eaf1fc); border-radius: 0 3px 0 0; font-weight: bold; white-space: nowrap; }
.doctab span { flex: 1; }
.tabx { width: 10px; height: 10px; padding: 1px; border: 1px solid #8c2e30; background: #d65c5a; }
.tabnew { width: 15px; padding: 3px 2px; border: 1px solid #86a6dc; background: #c5daf9; }
.tabnew svg { width: 9px; height: 9px; }
.tabnav { margin: auto 3px 4px auto; width: 30px; }

.work { display: flex; flex: 1; min-height: 0; }
.outline { display: flex; flex-direction: column; width: 95px; background: #fff; border-left: 1px solid #8e99ac; }
.otabs { display: flex; align-items: flex-end; height: 15px; padding-left: 5px; background: #e5e2d2; }
.otabs button { height: 12px; padding: 0 7px; background: #f5f2df; border: 1px solid #b9b59f; border-bottom: 0; border-radius: 4px 4px 0 0; }
.otabs .cur { background: #fff; font-weight: bold; padding: 0 5px; height: 13px; }
.thumbs { flex: 1; display: flex; flex-direction: column; gap: 11px; padding-top: 5px; }
.thumbs li { display: flex; height: 34px; }
.num { width: 22px; font: bold 9px/11px "DejaVu Sans", sans-serif; text-align: center; }
.num svg { width: 8px; height: 8px; margin: 0 auto; }
.th { width: 47px; height: 34px; border: 1px solid #24435e; }
.sel { outline: 1px solid #555; outline-offset: 1px; }
.views { display: flex; gap: 3px; align-items: center; height: 14px; background: #e9e6d8; }
.views button { width: 11px; height: 11px; padding: 1px; }
.views .hot { background: #f2b163; border: 1px solid #7a5a3a; }
.sdown { width: 6px; height: 6px; margin: 0 6px 14px auto; border: solid #4470b8; border-width: 0 2px 2px 0; transform: rotate(45deg); }

.center { flex: 1; display: flex; flex-direction: column; min-width: 0; border-right: 1px solid #a8b6cc; }
.stage { flex: 1; display: flex; min-height: 0; }
.canvas { flex: 1; display: flex; padding: 12px 11px 13px; background: #808080; }
.slide { flex: 1; background: #fff; border-left: 1px solid #000; border-bottom: 1px solid #000; box-shadow: 3px 3px 0 #000; }
.vbar { display: flex; align-items: flex-end; width: 12px; padding: 2px; background: #b3cdf6; }
.vbar svg { width: 8px; height: 18px; }
.hbar { display: flex; justify-content: space-between; height: 15px; padding: 2px 13px 2px 1px; background: #f4f2e6; border-bottom: 1px solid #b9b6a5; }
.hbar button, .nbar button { width: 11px; height: 10px; background: #ebe8da; }
.hbar svg, .nbar svg { width: 10px; height: 8px; }
.notes { display: flex; justify-content: space-between; height: 29px; background: #fff; }
.notes p { font-size: 11px; line-height: 16px; }
.nbar { display: flex; flex-direction: column; justify-content: space-between; width: 12px; background: #f6f5ee; }

.task { width: 153px; background: #fdfdfe; border-right: 1px solid #93acd9; white-space: nowrap; color: #22265a; }
.taskhead { display: flex; justify-content: flex-end; align-items: center; height: 17px; padding: 0 5px 0 0; background: linear-gradient(#dbe8fc, #b6cff6); border-bottom: 1px solid #7f9cd0; }
.taskhead svg { width: 20px; height: 8px; }
.tasktools { height: 43px; border-bottom: 1px solid #c3cce0; background: linear-gradient(#cbdefa 14px, #fdfdfe 14px); }
.task a, .task h2 { display: block; margin-left: 29px; font-size: 9px; line-height: 14px; }
.task .manage { margin: 1px 7px 0 0; text-align: right; }
.task h2 { margin-top: 47px; }
.task .online { margin-top: 34px; }

.drawbar { display: flex; align-items: center; height: 15px; background: linear-gradient(#d3e3fc, #aac6f4); border-top: 1px solid #9ab5e6; }
.drawbar .tb { height: 14px; }
.drawbar .grip { margin: 0 4px 0 2px; }
.drawbar .txt { width: 40px; text-align: left; }
.drawbar .auto { width: 50px; padding-left: 7px; }
.drawbar .end { width: 2px; height: 14px; background: #6f92d0; }

.dialog { position: absolute; top: 94px; left: 65px; right: 64px; height: 327px; display: flex; flex-direction: column; border: 1px solid #204a9c; background: #4a86de; padding: 0 3px 3px; }
.dtitle { display: flex; align-items: center; height: 15px; margin: 0 -3px; padding-left: 8px; background: linear-gradient(#4a86d8, #62a4f0 40%, #4a88e2); color: #0b1f4a; }
.dtitle h2 { flex: 1; font: bold 9px/14px "Liberation Sans", "Noto Sans CJK SC", sans-serif; color: #fff; }
.user { font: bold 7px/12px "Liberation Mono", monospace; }
.dtitle a { margin: 0 5px; color: #1029c8; text-decoration: underline; }
.dtitle button { align-self: flex-start; width: 29px; height: 12px; margin-right: 3px; border: 1px solid #6b2a2a; border-top: 0; border-radius: 0 0 3px 3px; background: linear-gradient(#e09a90, #b83a2e 50%, #cf6a54); }
.dtitle button svg { width: 7px; height: 7px; margin: auto; }
.dbody { flex: 1; display: flex; padding: 4px 5px 2px 3px; min-height: 0; background: linear-gradient(#cfe1f8, #e3eefb 30px, #dfeaf8); }
.places { display: flex; flex-direction: column; align-items: center; width: 63px; margin-right: 4px; padding-top: 6px; background: #7ba5df; border: 1px solid #a3c2ec; }
.places button { display: flex; flex-direction: column; align-items: center; width: 50px; height: 42px; padding-top: 5px; border-radius: 3px; color: #0d1b38; font-size: 9px; line-height: 13px; }
.places .cur { height: 43px; padding-top: 7px; background: #fff; }
.places svg { width: 22px; height: 22px; }
.browse { flex: 1; display: flex; flex-direction: column; min-width: 0; }
.pathrow { display: flex; align-items: center; height: 16px; margin-bottom: 6px; flex: none; }
.path { flex: 1; display: flex; align-items: center; height: 16px; margin-right: 4px; padding-left: 4px; border: 1px solid #8ea8ce; background: #fff; }
.path select { flex: 1; height: 14px; padding-left: 4px; font-size: 8px; }
.path, .field { position: relative; }
.path::after, .field::after { content: ""; position: absolute; right: 4px; top: 6px; border: 3px solid transparent; border-top: 3px solid #111; border-bottom: 0; }
.upl { display: flex; align-items: center; gap: 1px; width: 42px; padding-left: 4px; color: #8b929c; }
.files { flex: 1; padding: 2px; border: 1px solid #a4b9d8; background: #fff; }
.files li { display: flex; align-items: center; gap: 1px; height: 12px; font-size: 9px; }
.files .parent { padding-left: 12px; }
.form { flex: none; display: grid; grid-template-columns: 53px 1fr 53px; grid-template-rows: 15px 15px; row-gap: 4px; align-items: center; margin: 4px 0 3px; padding-left: 21px; }
.form button { height: 15px; border: 1px solid #7f92ae; border-radius: 2px; background: linear-gradient(#fff, #efede4 60%, #d6d2c2); line-height: 12px; }
.field { height: 15px; margin-right: 9px; border: 1px solid #8ea8ce; background: #fff; min-width: 0; }
.field input, .field select { display: block; width: calc(100% - 15px); height: 13px; padding-left: 2px; overflow: hidden; text-overflow: clip; }
.popup { position: absolute; z-index: 2; top: 14px; left: -1px; right: -1px; height: 69px; display: flex; border: 1px solid #222; background: #fff; }
.popup ul { flex: 1; min-width: 0; display: grid; grid-auto-rows: 1fr; }
.popup li { padding-left: 1px; overflow: hidden; white-space: nowrap; line-height: 9px; }
.popup .hl { background: #2f62b8; color: #fff; }
.pbar { display: flex; flex-direction: column; align-items: center; width: 11px; padding: 2px 1px; background: #edf2fc; }
.pbar svg { width: 8px; height: 6px; }
.pbar i { width: 9px; height: 26px; margin: 3px 0 auto; border: 1px solid #a6bdf0; background: #c5d6fc; }
.split { align-self: center; width: 6px; height: 37px; margin: 0 2px 0 1px; padding: 1px; border: 1px solid #9bb2d2; background: #dbe3ea; }
.split svg { width: 3px; height: 6px; margin: auto; }
.cloud { width: 155px; display: flex; flex-direction: column; margin: 2px 0 3px; }
.ctabs { position: relative; display: flex; height: 14px; padding-left: 18px; gap: 18px; }
.ctabs > svg { position: absolute; inset: 0; width: 100%; height: 14px; }
.ctabs button { position: relative; height: 13px; }
.cpanel { flex: 1; border: 1px solid #a4b9d8; border-top: 0; background: #fff; }
.tip { display: flex; align-items: center; gap: 6px; height: 17px; padding-left: 5px; background: #fdfcdc; white-space: nowrap; font-size: 8px; }
.tree { padding: 2px 0 0 17px; }
.tree li { display: flex; align-items: center; gap: 4px; height: 11px; line-height: 11px; white-space: nowrap; }
.tree .root { margin-left: -10px; height: 12px; gap: 3px; }
.tree .sub { padding-left: 14px; gap: 3px; }
.tree b { font-weight: normal; background: #e6e4de; }
.pm { width: 7px; height: 7px; }

.brand { position: absolute; z-index: 3; left: 15px; bottom: 4px; color: #fff; text-shadow: 1px 0 #000, -1px 0 #000, 0 1px #000, 0 -1px #000, 1px 1px #000, -1px -1px #000, 1px -1px #000, -1px 1px #000; }
.brand div { display: flex; gap: 3px; padding-left: 1px; font: bold 15px/18px "Noto Sans CJK SC", sans-serif; }
.brand p { font: bold 10px/12px "Liberation Mono", monospace; }
```
